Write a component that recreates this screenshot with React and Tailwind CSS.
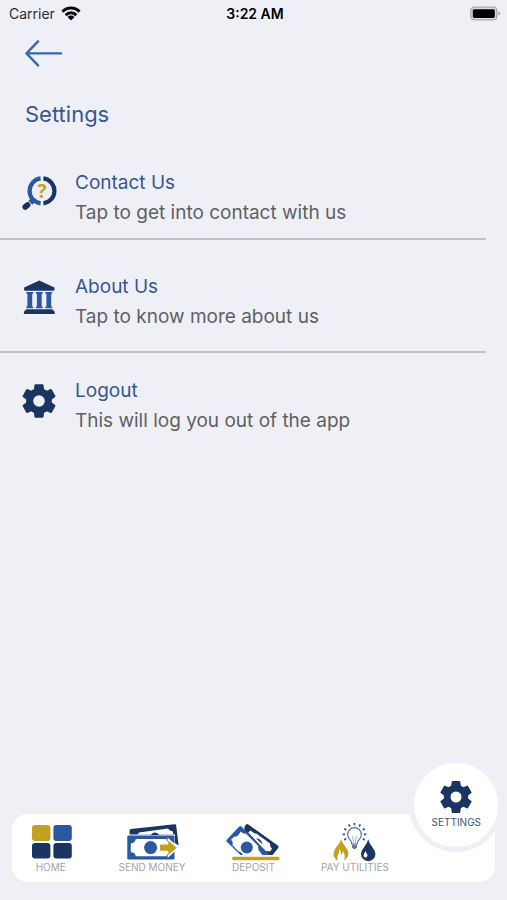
import React from 'react';

const WifiIcon = () => (
  <svg viewBox="0 0 20 16" className="w-5 h-4" aria-hidden="true">
    <g fill="none" stroke="#0b0b0d" strokeWidth="3">
      <path d="M1.4 5.7 C6.3 0.7 13.7 0.7 18.6 5.7" />
      <path d="M4.6 9.1 C7.8 6.1 12.2 6.1 15.4 9.1" />
    </g>
    <path d="M6.5 10.9 C8.6 9.1 11.4 9.1 13.5 10.9 L10 14.4 Z" fill="#0b0b0d" />
  </svg>
);

const BatteryIcon = () => (
  <svg viewBox="0 0 32 16" className="w-8 h-4" aria-hidden="true">
    <rect x="1.8" y="1.2" width="26" height="12.6" rx="3.4" fill="#dcdce0" stroke="#a9a9ad" strokeWidth="1.3" />
    <rect x="3.8" y="3.2" width="22" height="8.8" rx="1.4" fill="#000" />
    <path d="M29.3 5.2 Q31.4 6.4 31.4 7.5 Q31.4 8.6 29.3 9.8 Z" fill="#a9a9ad" />
  </svg>
);

const BackArrow = () => (
  <svg viewBox="0 0 40 28" className="w-10 h-7" aria-hidden="true">
    <path
      d="M14 2.4 L2.5 14.4 L14 26.4 M2.5 14.4 H37"
      fill="none"
      stroke="#3a66ac"
      strokeWidth="2.4"
      strokeLinecap="round"
      strokeLinejoin="round"
    />
  </svg>
);

const toothAngles = [0, 60, 120, 180, 240, 300];

const GearIcon = ({ className }) => (
  <svg viewBox="0 0 40 40" className={className} aria-hidden="true">
    <circle cx="20" cy="20" r="9.3" fill="none" stroke="#1b3563" strokeWidth="7" />
    {toothAngles.map((angle) => (
      <path
        key={angle}
        d="M16.5 3.2 H23.5 Q24.4 3.2 24.5 4 L25.1 8.2 L27 11 H13 L14.9 8.2 L15.5 4 Q15.6 3.2 16.5 3.2 Z"
        fill="#1b3563"
        transform={`rotate(${angle} 20 20)`}
      />
    ))}
  </svg>
);

const ContactIcon = () => (
  <svg viewBox="0 0 40 40" className="w-10 h-10" aria-hidden="true">
    <path d="M21.6 5.4 A12.6 12.6 0 0 0 21.6 30.4" fill="none" stroke="#2a58a2" strokeWidth="4.2" />
    <path d="M24.4 5.4 A12.6 12.6 0 0 1 24.4 30.4" fill="none" stroke="#1b3563" strokeWidth="4.2" />
    <path d="M14.8 26.2 L11.4 29.8" stroke="#2a58a2" strokeWidth="5.4" />
    <path d="M8.6 32 L6.2 34" stroke="#1b2f5c" strokeWidth="5.6" strokeLinecap="round" />
    <text x="23" y="25" textAnchor="middle" fill="#c6a229" className="font-['Open_Sans',sans-serif] text-[19px] font-bold">
      ?
    </text>
  </svg>
);

const BankIcon = () => (
  <svg viewBox="0 0 40 40" className="w-10 h-10" aria-hidden="true">
    <g fill="#1b3563">
      <path d="M20.3 3.5 L35.5 10.6 V12.4 Q35.5 13.8 34 13.8 H6.6 Q5.1 13.8 5.1 12.4 V10.6 Z" />
      <path d="M7.3 32.2 H33.3 L35.7 34.8 V37 H4.9 V34.8 Z" />
    </g>
    <g fill="#2a58a2">
      <path d="M7.4 15 H14.2 V16.8 H13.2 V29.6 H14.2 V31.3 H7.4 V29.6 H8.4 V16.8 H7.4 Z" />
      <path d="M16.9 15 H23.7 V16.8 H22.7 V29.6 H23.7 V31.3 H16.9 V29.6 H17.9 V16.8 H16.9 Z" />
      <path d="M26.4 15 H33.2 V16.8 H32.2 V29.6 H33.2 V31.3 H26.4 V29.6 H27.4 V16.8 H26.4 Z" />
    </g>
  </svg>
);

const HomeIcon = () => (
  <svg viewBox="0 0 56 40" className="w-14 h-10" aria-hidden="true">
    <rect x="9" y="3" width="18.4" height="16" rx="3" fill="#c1a023" />
    <rect x="30.4" y="3" width="18.4" height="16" rx="3" fill="#2a58a2" />
    <rect x="9" y="21" width="18.4" height="15.6" rx="3" fill="#1b3563" />
    <rect x="30.4" y="21" width="18.4" height="15.6" rx="3" fill="#1b3563" />
  </svg>
);

const SendMoneyIcon = () => (
  <svg viewBox="0 0 56 40" className="w-14 h-10" aria-hidden="true">
    <path d="M7 7 L50.5 2.2 Q52 2 52.2 3.5 L54.6 23.4 L51 21 V12.6 H5.6 V8.6 Q5.6 7.2 7 7 Z" fill="#1b3563" />
    <path d="M15 10.4 L44 6.6 Q45.6 9.2 48.6 9.2 L49.6 12.6 H34 Q31 9 27 12.6 H12.6 Q14.6 12 15 10.4 Z" fill="#fff" />
    <path d="M26.6 13 Q31 8 35.4 13 Z" fill="#1b3563" />
    <rect x="3.3" y="13.6" width="47.2" height="23.8" rx="1" fill="#2a58a2" />
    <path d="M11.8 17 H42.4 Q42.8 20.4 46.8 20.8 V30.4 Q42.8 30.8 42.4 34.2 H11.8 Q11.2 30.4 6.8 30 V21.4 Q11.2 20.8 11.8 17 Z" fill="#fff" />
    <circle cx="26.6" cy="25.6" r="6.5" fill="#2a58a2" />
    <path d="M43.6 15.6 L55 25.7 L43.6 36 V30 H35.4 V21.4 H43.6 Z" fill="#fff" />
    <path d="M36 22.6 H44.2 V18.4 L52.8 25.7 L44.2 33 V28.8 H36 Z" fill="#c1a023" />
  </svg>
);

const DepositIcon = () => (
  <svg viewBox="0 0 56 40" className="w-14 h-10" aria-hidden="true">
    <path d="M19.6 4.6 L21 2.6 Q22 1.6 23.4 2.6 L52.8 23.6 Q54.2 24.8 53 26.2 L47.6 33 H43.6 L39.4 29 L19.4 8.2 Z" fill="#1b3563" />
    <path d="M25.4 8.6 Q28.6 11.4 31.4 11.6 L45 21.4 Q44.6 24.6 47 26.4 L45.2 29.4 Q42.4 28.4 41 29.4 L23.2 10.6 Z" fill="#fff" />
    <path d="M31 16.4 Q36.6 16.4 37.4 22.2 Z" fill="#1b3563" />
    <path d="M14.2 4.6 Q15.2 3.6 16.4 4.6 L44.8 33 H15.4 L1.6 19.6 Q1 18.8 1.6 18 Z" fill="#2a58a2" />
    <path d="M15.6 9.4 Q18.2 12 20.8 11.6 L33.4 24.2 Q32.4 27.6 35.4 30.4 L37.4 33 H18 Q17.4 30.4 13.6 29.4 L7.4 23.2 Q8.6 19.8 6 17.8 L9.4 14.6 Q13 15 15.6 9.4 Z" fill="#fff" />
    <circle cx="21.8" cy="25.6" r="6" fill="#2a58a2" />
    <rect x="7.2" y="34.8" width="47.2" height="3.4" rx="1" fill="#c1a023" />
  </svg>
);

const UtilitiesIcon = () => (
  <svg viewBox="0 0 56 40" className="w-14 h-10" aria-hidden="true">
    <g fill="none" stroke="#4770ae" strokeWidth="1.2">
      <path d="M24.8 22 Q24.6 19.4 22.6 17.2 A6.8 6.8 0 1 1 32.4 17.2 Q30.4 19.4 30.2 22 Z" />
      <path d="M25.6 14 L26.8 21.6 M29.4 14 L28.2 21.6" strokeWidth="0.5" />
    </g>
    <path d="M25 22.8 H30 V25.2 L28.4 27 H26.6 L25 25.2 Z" fill="#6b7894" />
    <g stroke="#2a58a2" strokeWidth="1.8">
      <path d="M27.5 1 V3.2 M21.7 2.4 L22.9 4.5 M33.3 2.4 L32.1 4.5 M17.2 6.7 L19.3 7.9 M37.8 6.7 L35.7 7.9 M15.7 12.3 H18.1 M39.3 12.3 H36.9 M17.2 17.9 L19.3 16.8 M37.8 17.9 L35.7 16.8" />
    </g>
    <path d="M14.2 17.2 Q15 20.6 18.2 24.4 Q21.6 28 21.4 31.6 Q21 36.4 16.6 38.8 Q19.4 34.6 16 29.2 Q15.6 32 13.8 33.2 Q14.4 29.6 12.6 27 Q12.2 31 10.6 33.4 Q9.8 36 11 38.8 Q6.4 36.2 6.5 31.4 Q6.6 28 10 24.2 Q13 20.8 14.2 17.2 Z" fill="#c1a023" />
    <path d="M41.2 17.2 Q42 21 45.4 25.2 Q48.4 29 48.4 32 A7.2 7.2 0 0 1 34 32 Q34 29 37 25.2 Q40.4 21 41.2 17.2 Z" fill="#1b3563" />
    <path d="M38.4 29 Q39.4 31 40.2 32.4 A2 2 0 1 1 36.8 32.4 Q37.6 31 38.4 29 Z" fill="#fff" />
  </svg>
);

const settings = [
  { title: 'Contact Us', text: 'Tap to get into contact with us', icon: <ContactIcon /> },
  { title: 'About Us', text: 'Tap to know more about us', icon: <BankIcon /> },
  { title: 'Logout', text: 'This will log you out of the app', icon: <GearIcon className="w-10 h-10" /> },
];

const rowStyles = [
  'pb-[10px] border-b-2',
  'pt-8 pb-[19px] border-b-2',
  'pt-[23px]',
];

const tabs = [
  { label: 'HOME', icon: <HomeIcon /> },
  { label: 'SEND MONEY', icon: <SendMoneyIcon /> },
  { label: 'DEPOSIT', icon: <DepositIcon /> },
  { label: 'PAY UTILITIES', icon: <UtilitiesIcon /> },
];

const StatusBar = () => (
  <header className="grid grid-cols-3 items-center h-7 pl-[9px] pr-[6px] text-black">
    <div className="flex items-center gap-[6px] text-sm">
      <span className="text-[#2c2c30]">Carrier</span>
      <WifiIcon />
    </div>
    <span className="text-center text-sm font-semibold">3:22 AM</span>
    <div className="flex justify-end">
      <BatteryIcon />
    </div>
  </header>
);

const SettingsList = () => (
  <ul className="mt-[39px] mr-[21px]">
    {settings.map((item, index) => (
      <li key={item.title} className={`border-[#c3c4ca] ${rowStyles[index]}`}>
        <button type="button" className="flex items-start gap-4 w-full pl-[19px] text-left">
          <span className="mt-[5px] shrink-0">{item.icon}</span>
          <span className="text-[19px] leading-[30px]">
            <span className="block text-[#36578f]">{item.title}</span>
            <span className="block text-[#5f6064]">{item.text}</span>
          </span>
        </button>
      </li>
    ))}
  </ul>
);

const TabBar = () => (
  <nav className="mx-3 mb-[18px] h-[68px] rounded-2xl bg-white">
    <ul className="-mx-3 grid grid-cols-5">
      {tabs.map((tab) => (
        <li key={tab.label} className="flex justify-center">
          <button type="button" className="flex flex-col items-center pt-2">
            {tab.icon}
            <span className="text-[10px] leading-[10px] text-[#a3a3a7] whitespace-nowrap">{tab.label}</span>
          </button>
        </li>
      ))}
      <li className="relative flex justify-center">
        <button
          type="button"
          className="absolute -top-14 flex flex-col items-center w-[94px] h-[94px] pt-[15px] rounded-full border-[5px] border-[#eff0f6] bg-white"
        >
          <GearIcon className="w-[38px] h-[38px]" />
          <span className="text-[10px] leading-3 text-[#435478]">SETTINGS</span>
        </button>
      </li>
    </ul>
  </nav>
);

const App = () => {
  return (
    <div className="flex flex-col min-h-screen bg-[#eff0f6] font-['Inter',sans-serif]">
      <StatusBar />
      <main className="flex-1">
        <button type="button" aria-label="Back" className="block ml-6 mt-[11px]">
          <BackArrow />
        </button>
        <h1 className="mt-8 ml-[25px] text-[22px] leading-[30px] text-[#36578f]">Settings</h1>
        <SettingsList />
      </main>
      <TabBar />
    </div>
  );
};

export default App;
